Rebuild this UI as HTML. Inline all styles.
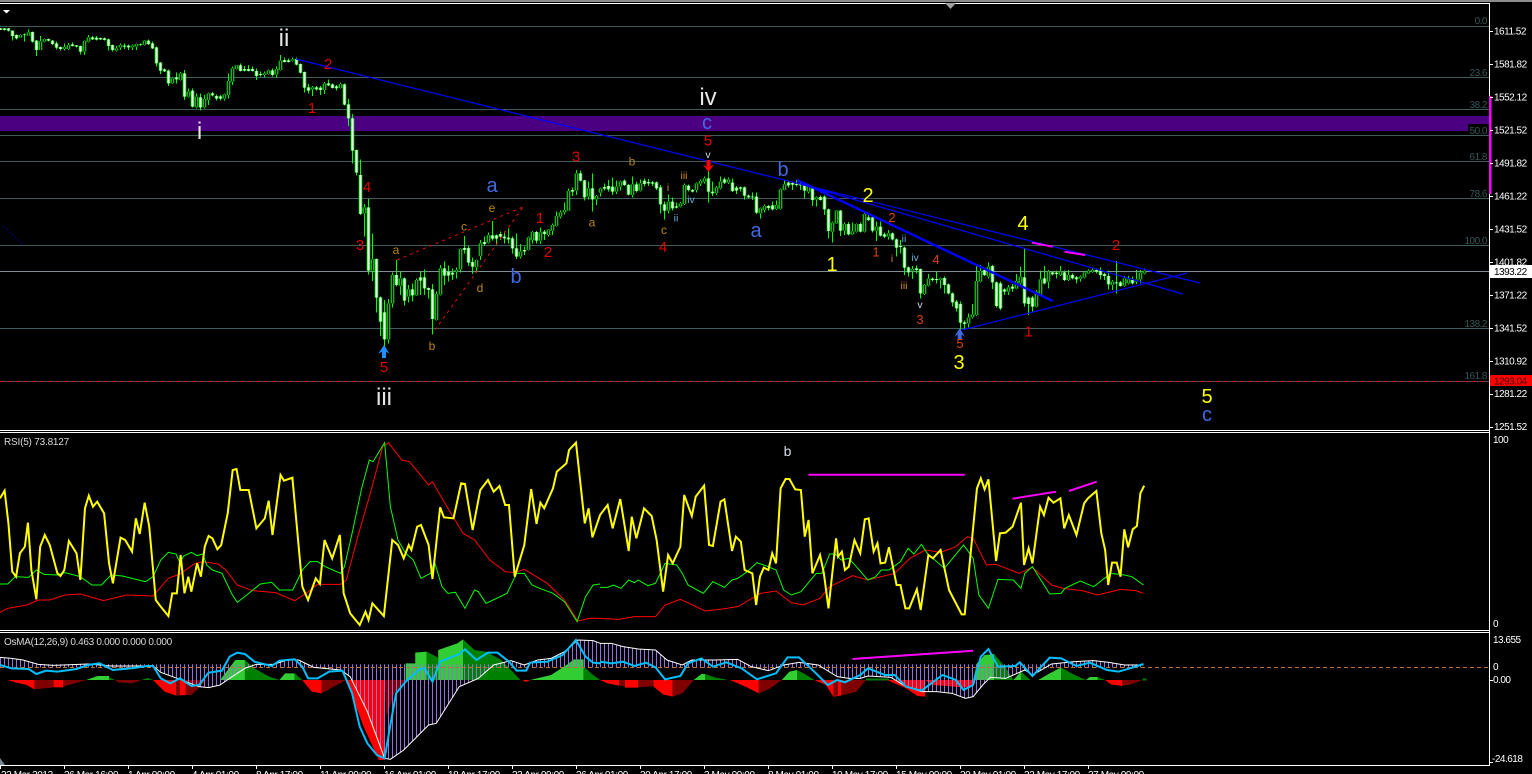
<!DOCTYPE html>
<html>
<head>
<meta charset="utf-8">
<style>
html,body{margin:0;padding:0;background:#000;width:1532px;height:774px;overflow:hidden}
svg{display:block;position:absolute;left:0;top:0}
text{font-family:"Liberation Sans",sans-serif}
.ax{fill:#fff;font-size:10px;letter-spacing:-.5px}
.fb{fill:#355555;font-size:10px;letter-spacing:-.5px;text-anchor:end}
.big{fill:#e6e6e6;font-size:24px;text-anchor:middle}
.bl{fill:#4169e1;font-size:20px;text-anchor:middle}
.ye{fill:#ffff00;font-size:20px;text-anchor:middle}
.rd{fill:#e00000;font-size:15px;text-anchor:middle}
.or{fill:#d8400f;font-size:13px;text-anchor:middle}
.go{fill:#b8860b;font-size:12px;text-anchor:middle}
.ro{fill:#d98a2b;font-size:10.5px;text-anchor:middle}
.rb{fill:#6fa8d8;font-size:10.5px;text-anchor:middle}
.tm{fill:#fff;font-size:10px;letter-spacing:-.4px}
.ln{fill:none;stroke-linejoin:miter;vector-effect:non-scaling-stroke}
</style>
</head>
<body>
<svg width="1532" height="774" viewBox="0 0 1532 774" xmlns="http://www.w3.org/2000/svg">
<defs>
<pattern id="h" width="4" height="10" patternUnits="userSpaceOnUse"><rect x="0" width="1" height="10" fill="#9370db"/></pattern>
<clipPath id="mc">
<rect x="0" y="664.3" width="1144" height="3.2"/>
<polygon transform="translate(0,430) scale(.3827,.3333)" points="0,707 0,682 30,685 60,690 100,703 140,706 230,702 290,708 400,708 420,727 470,748 520,770 545,773 575,765 600,745 640,715 670,703 715,703 750,690 780,690 820,712 890,720 915,740 960,845 1005,985 1020,988 1055,960 1120,885 1140,880 1200,770 1250,745 1290,705 1335,692 1370,705 1405,690 1440,685 1475,665 1510,630 1550,632 1568,640 1568,707"/>
<polygon transform="translate(600,430) scale(.3827,.3333)" points="0,707 0,640 30,640 60,650 100,657 145,660 175,690 215,705 240,690 300,690 360,688 395,710 440,722 480,705 520,697 570,705 620,740 650,745 680,745 700,738 760,742 800,770 840,785 880,785 920,790 955,805 975,800 1000,765 1020,742 1060,745 1110,720 1130,735 1180,702 1240,695 1290,692 1330,697 1370,705 1420,705 1420,707"/>
</clipPath>
<path id="b1w" d="M1 85V90M13 85V90M25 85V92M37 92V108M49 105V115M73 102V104M97 96V125M109 122V150M145 117V122M157 122V132M169 130V143M181 141V147M217 133V138M229 136V140M241 138V155M277 112V118M289 113V119M301 114V118M313 115V120M325 118V138M337 135V150M373 137V140M385 137V142M421 133V135M445 122V132M457 130V145M469 142V190M481 188V212M493 208V214M505 212V250M529 232V238M553 220V290M577 272V320M601 292V322M637 280V286M649 288V296M661 289V296M721 196V213M733 207V212M745 207V213M757 207V213M769 213V228M781 222V225M817 211V225M853 180V186M865 181V186M889 177V194M901 192V218M913 216V263M925 262V272M949 262V268M961 263V270M985 250V256M997 253V264M1009 259V265M1033 253V314M1045 313V355M1057 355V452M1069 450V518M1081 525V642M1105 622V812M1129 777V893M1141 892V965M1153 937V1018M1189 825V855M1213 835V902M1237 868V886M1261 832V842M1273 832V865M1285 864V870M1297 868V957M1333 805V827M1345 815V827M1357 818V824M1393 744V750M1405 744V788M1417 786V800M1453 726V732M1477 706V716M1489 706V716"/>
<path id="b1b" d="M61 105V113M85 97V107M121 124V150M133 117V125M193 141V147M205 135V147M253 123V155M265 112V125M349 145V152M361 135V142M397 137V142M409 132V140M433 122V135M517 235V250M541 220V240M565 275V290M589 290V322M613 297V322M625 280V300M673 283V296M685 243V285M697 205V245M709 196V207M793 220V225M805 211V222M829 207V224M841 182V210M877 178V182M937 262V268M973 250V270M1021 252V264M1093 622V640M1117 778V812M1165 910V1018M1177 825V910M1201 835V857M1225 868V890M1249 840V886M1309 882V960M1321 805V884M1369 810V815M1381 747V808M1429 780V802M1441 730V768M1465 705V728"/>
<path id="b2w" d="M1 462V470M13 470V475M25 473V478M37 475V505M49 505V530M73 510V514M109 456V482M133 455V462M217 330V335M241 280V302M253 301V352M277 325V358M313 321V326M325 318V328M337 320V335M373 302V315M385 315V344M409 313V333M433 302V312M445 306V310M457 307V311M469 307V325M481 322V373M493 373V392M517 365V385M529 379V383M565 317V330M577 330V335M625 295V335M637 335V340M673 298V308M697 308V333M709 323V332M721 322V326M733 322V347M745 347V352M757 350V352M769 350V398M805 378V384M817 376V388M865 308V316M877 309V314M889 312V315M901 312V316M913 315V332M937 325V360M961 351V360M973 350V388M985 388V453M1021 392V452M1045 432V463M1081 432V455M1105 412V420M1117 412V452M1141 440V467M1153 463V470M1177 460V478M1189 478V503M1201 498V501M1213 503V563M1225 562V577M1249 565V570M1261 567V640M1297 596V600M1309 597V600M1333 594V615M1345 613V640M1357 640V667M1369 665V685M1381 672V728M1393 727V732M1453 570V585M1477 558V607M1489 607V678"/>
<path id="b2b" d="M61 515V530M85 472V510M97 456V480M121 457V482M145 449V465M157 435V452M169 408V438M181 397V410M193 390V397M205 333V392M229 280V332M265 325V350M289 348V358M301 325V338M349 320V335M361 305V320M397 313V345M421 310V332M505 365V392M541 370V380M553 315V372M589 310V330M601 303V311M613 295V305M649 322V340M661 305V325M685 298V308M781 385V400M793 378V390M829 375V387M841 328V386M853 313V330M925 318V335M949 352V358M997 428V455M1009 392V430M1033 432V452M1057 454V463M1069 432V455M1093 402V455M1129 440V452M1165 460V470M1237 567V572M1273 615V642M1285 596V617M1321 595V600M1405 713V730M1417 703V712M1429 603V705M1441 573V605M1465 560V590"/>
<path id="b3w" d="M1000.5 850V925M1004.5 868V875M1012.5 860V866M1024.5 832V910M1028.5 893V912M1032.5 893V920M1044.5 835V850M1052.5 817V823M1056.5 818V822M1064.5 817V840M1072.5 825V835M1076.5 832V838M1096.5 810V815M1100.5 810V825M1104.5 822V828M1108.5 828V853M1116.5 847V850M1120.5 847V858M1132.5 840V850"/>
<path id="b3b" d="M1008.5 862V875M1016.5 843V866M1020.5 830V850M1036.5 875V920M1040.5 838V885M1048.5 815V845M1060.5 815V825M1068.5 825V840M1080.5 830V836M1084.5 817V832M1088.5 812V820M1092.5 810V815M1112.5 845V855M1124.5 835V857M1128.5 838V850M1136.5 838V845M1140.5 818V838M1144.5 812V820"/>
</defs>

<rect width="1532" height="774" fill="#000"/>
<rect x="0" y="0" width="1532" height="2" fill="#8c8c8c"/>

<!-- purple band -->
<rect x="0" y="116" width="1489" height="15" fill="#4b0082"/>

<!-- fib lines -->
<g stroke="#3d5c5c" stroke-width="1" shape-rendering="crispEdges">
<path d="M0 26.5H1489M0 77.5H1489M0 109.5H1489M0 135.5H1489M0 161.5H1489M0 198.5H1489M0 245.5H1489M0 328.5H1489M0 381.5H1489"/>
</g>
<path d="M0 271.5H1489" stroke="#7f8f97" stroke-width="1" shape-rendering="crispEdges"/>
<path d="M0 381.5H1489" stroke="#d01818" stroke-width="1" stroke-dasharray="5 3" shape-rendering="crispEdges"/>

<!-- fib labels -->
<text class="fb" x="1487" y="24">0.0</text>
<text class="fb" x="1487" y="76">23.6</text>
<text class="fb" x="1487" y="108">38.2</text>
<rect x="1468" y="124" width="21" height="11" fill="#000"/>
<text class="fb" x="1487" y="134">50.0</text>
<text class="fb" x="1487" y="160">61.8</text>
<text class="fb" x="1487" y="197">78.6</text>
<text class="fb" x="1487" y="244">100.0</text>
<text class="fb" x="1487" y="327">138.2</text>
<text class="fb" x="1487" y="379">161.8</text>

<!-- candles wicks -->
<g stroke="#00ff00" fill="none" shape-rendering="crispEdges">
<path transform="translate(.17,0) scale(.33333)" stroke-width="3" d="M1 84V90M13 84V91M25 84V94M37 92V122M49 103V118M61 103V114M73 100V125M85 88V108M97 94V127M109 120V168M121 108V150M133 115V127M145 115V124M157 120V135M169 125V148M181 139V152M193 130V152M205 129V150M217 128V140M229 135V142M241 136V163M253 121V165M265 105V128M277 108V120M289 108V122M301 112V120M313 113V122M325 116V152M337 133V155M349 138V155M361 130V150M373 130V147M385 133V150M397 133V150M409 130V150M421 130V138M433 120V136M445 119V135M457 125V147M469 140V200M481 186V222M493 206V216M505 208V258M517 233V252M529 218V250M541 216V242M553 210V300M565 265V292M577 265V322M589 280V325M601 280V332M613 285V325M625 278V315M637 276V290M649 283V302M661 285V302M673 281V302M685 220V295M697 200V255M709 195V208M721 190V215M733 198V214M745 195V215M757 200V215M769 205V240M781 215V230M793 215V232M805 209V224M817 205V230M829 200V232M841 165V212M853 172V188M865 176V188M877 172V184M889 172V196M901 190V220M913 214V278M925 252V280M937 258V288M949 258V272M961 258V285M973 246V282M985 238V258M997 250V266M1009 255V272M1021 248V266M1033 251V316M1045 297V378M1057 342V490M1069 448V527M1081 478V645M1093 612V710M1105 597V823M1117 700V843M1129 775V938M1141 890V1008M1153 900V1060M1165 897V1030M1177 818V922M1189 780V860M1201 815V885M1213 833V917M1225 855V908M1237 850V905M1249 835V888M1261 815V885M1273 808V885M1285 862V895M1297 852V1003M1309 875V962M1321 795V886M1333 785V855M1345 797V845M1357 805V840M1369 802V835M1381 745V818M1393 708V760M1405 738V798M1417 772V822M1429 778V818M1441 720V780M1453 710V738M1465 698V730M1477 663V722M1489 704V735"/>
<path transform="translate(500.17,80) scale(.33333)" stroke-width="3" d="M1 455V480M13 455V490M25 445V490M37 470V520M49 460V537M61 492V535M73 500V525M85 470V512M97 453V490M109 453V490M121 442V492M133 450V480M145 447V470M157 430V465M169 395V440M181 392V415M193 368V403M205 325V393M217 322V348M229 270V345M241 272V305M253 300V362M265 305V358M277 280V395M289 345V375M301 322V350M313 310V332M325 300V335M337 292V345M349 302V342M361 302V332M373 298V318M385 312V346M397 290V352M409 305V338M421 298V335M433 295V320M445 297V318M457 303V318M469 304V330M481 315V400M493 365V418M505 343V400M517 352V392M529 368V386M541 366V382M553 310V375M565 314V335M577 327V338M589 307V338M601 298V318M613 290V310M625 262V368M637 305V348M649 318V345M661 290V328M673 292V312M685 292V312M697 295V336M709 318V342M721 319V335M733 319V358M745 343V355M757 338V360M769 338V402M781 382V415M793 374V398M805 375V392M817 365V392M829 362V390M841 325V388M853 302V332M865 303V322M877 305V330M889 300V320M901 308V330M913 310V356M925 312V340M937 318V378M949 349V380M961 347V362M973 347V405M985 385V475M997 425V488M1009 390V432M1021 390V468M1033 428V465M1045 426V467M1057 428V465M1069 430V458M1081 428V458M1093 395V458M1105 405V423M1117 409V458M1129 425V483M1141 425V470M1153 458V474M1165 450V478M1177 457V481M1189 476V530M1201 480V520M1213 500V585M1225 560V590M1237 558V597M1249 557V580M1261 565V655M1273 612V645M1285 582V620M1297 592V604M1309 575V610M1321 592V625M1333 590V640M1345 610V643M1357 638V680M1369 660V695M1381 665V770M1393 722V748M1405 700V742M1417 672V716M1429 553V708M1441 555V608M1453 565V588M1465 547V595M1477 555V627M1489 604V682"/>
<path transform="scale(1,.33333)" stroke-width="1" d="M1000.5 845V930M1004.5 865V885M1008.5 855V885M1012.5 852V875M1016.5 822V868M1020.5 800V855M1024.5 745V920M1028.5 890V945M1032.5 888V935M1036.5 870V922M1040.5 812V888M1044.5 798V853M1048.5 810V865M1052.5 813V826M1056.5 812V835M1060.5 798V828M1064.5 812V843M1068.5 810V843M1072.5 820V838M1076.5 828V850M1080.5 826V845M1084.5 814V835M1088.5 808V822M1092.5 803V818M1096.5 805V820M1100.5 802V838M1104.5 818V840M1108.5 812V868M1112.5 840V870M1116.5 783V880M1120.5 843V860M1124.5 828V860M1128.5 828V853M1132.5 830V853M1136.5 810V852M1140.5 810V850M1144.5 805V823"/>
</g>
<!-- candle bodies -->
<g fill="none">
<g transform="translate(.17,0) scale(.33333)">
<use href="#b1w" stroke="#00ff00" stroke-width="10.5"/><use href="#b1b" stroke="#00ff00" stroke-width="10.5"/>
<use href="#b1w" stroke="#fff" stroke-width="5.5"/><use href="#b1b" stroke="#000" stroke-width="4.5"/>
</g>
<g transform="translate(500.17,80) scale(.33333)">
<use href="#b2w" stroke="#00ff00" stroke-width="10.5"/><use href="#b2b" stroke="#00ff00" stroke-width="10.5"/>
<use href="#b2w" stroke="#fff" stroke-width="5.5"/><use href="#b2b" stroke="#000" stroke-width="4.5"/>
</g>
<g transform="scale(1,.33333)">
<use href="#b3w" stroke="#00ff00" stroke-width="3.5"/><use href="#b3b" stroke="#00ff00" stroke-width="3.5"/>
<use href="#b3w" stroke="#fff" stroke-width="1.8"/><use href="#b3b" stroke="#000" stroke-width="1.5"/>
</g>
</g>

<!-- trend lines -->
<path d="M296 59L1200 283M800 184L1183 294M962 330L1187 273" stroke="#0000ff" stroke-width="1.2" fill="none"/>
<path d="M797 180L1052.6 301" stroke="#0000ff" stroke-width="2.4" fill="none"/>
<path d="M3 226L24 245" stroke="#000080" stroke-width="1" stroke-dasharray="2 2" fill="none"/>
<path d="M397 260L523 207M435 330L523 207" stroke="#e01010" stroke-width="1" stroke-dasharray="3 4" fill="none"/>
<path d="M1032 242.7L1052.6 246.7M1064.5 251.7L1085 255" stroke="#ff00ff" stroke-width="2" fill="none"/>

<!-- arrows -->
<polygon points="384,345 389.5,354 386,351.5 386,358 382,358 382,351.5 378,354" fill="#1e90ff"/>
<polygon points="959.7,328 965,337 961.7,334.5 961.7,340 957.7,340 957.7,334.5 954.3,337" fill="#4169e1"/>
<polygon points="706.5,160 710.5,160 710.5,166.5 714,164.5 708.5,172 703,164.5 706.5,166.5" fill="#ff0000"/>

<!-- wave labels -->
<text class="big" x="284" y="46">ii</text>
<text class="big" x="199.5" y="139">i</text>
<text class="big" x="384" y="405">iii</text>
<text class="big" x="708" y="105">iv</text>

<text class="bl" x="707" y="129">c</text>
<text class="bl" x="1207" y="421">c</text>
<text class="bl" x="492" y="192">a</text>
<text class="bl" x="516" y="283">b</text>
<text class="bl" x="756" y="237">a</text>
<text class="bl" x="783" y="176">b</text>

<text class="ye" x="832" y="271">1</text>
<text class="ye" x="868" y="202">2</text>
<text class="ye" x="959" y="369">3</text>
<text class="ye" x="1023" y="230">4</text>
<text class="ye" x="1207" y="403">5</text>

<text class="rd" x="328" y="69">2</text>
<text class="rd" x="312" y="113">1</text>
<text class="rd" x="367" y="192">4</text>
<text class="rd" x="360" y="250">3</text>
<text class="rd" x="384" y="372">5</text>
<text class="rd" x="576" y="161.7">3</text>
<text class="rd" x="540" y="223">1</text>
<text class="rd" x="548" y="257">2</text>
<text class="rd" x="663" y="252">4</text>
<text class="rd" x="708" y="145.7">5</text>
<text class="rd" x="1028.5" y="336.5">1</text>
<text class="rd" x="1116" y="250">2</text>

<text class="or" x="876" y="256.5">1</text>
<text class="or" x="892" y="222">2</text>
<text class="or" x="936" y="264">4</text>
<text class="or" x="920" y="324">3</text>
<text class="or" x="960" y="348">5</text>

<text class="go" x="396" y="254">a</text>
<text class="go" x="432" y="350">b</text>
<text class="go" x="464" y="230.5">c</text>
<text class="go" x="480" y="292">d</text>
<text class="go" x="492" y="212">e</text>
<text class="go" x="632" y="165.5">b</text>
<text class="go" x="592" y="226.5">a</text>
<text class="go" x="664" y="234">c</text>

<text class="ro" x="684" y="179">iii</text>
<text class="ro" x="668" y="191">i</text>
<text class="rb" x="691" y="203">iv</text>
<text class="rb" x="676" y="221.5">ii</text>
<text class="rb" x="904" y="242">ii</text>
<text class="rb" x="915" y="261">iv</text>
<text class="ro" x="892" y="262">i</text>
<text class="ro" x="904" y="289">iii</text>
<text fill="#c8d8e8" font-size="10.5" text-anchor="middle" x="708" y="158">v</text>
<text fill="#c8d8e8" font-size="10.5" text-anchor="middle" x="920" y="308">v</text>

<!-- frames -->
<g stroke="#fff" stroke-width="1" shape-rendering="crispEdges" fill="none">
<path d="M0 3.5H1489.5V765.5H0"/>
<path d="M0 430.5H1489M0 432.5H1489M0 630.5H1489M0 632.5H1489"/>
</g>
<polygon points="3,10 10,10 6.5,13.5" fill="#fff"/>
<polygon points="945,3 956,3 950.5,9" fill="#a0a0a0"/>
<polygon points="0,758 5,765 0,765" fill="#789"/>
<rect x="1489" y="96" width="2.5" height="98" fill="#ff00ff"/>

<!-- axis ticks -->
<path d="M1490 31.5h3M1490 64.5h3M1490 97.5h3M1490 130.5h3M1490 163.5h3M1490 196.5h3M1490 229.5h3M1490 262.5h3M1490 295.5h3M1490 328.5h3M1490 361.5h3M1490 394.5h3M1490 427.5h3M1490 680.5h3M1490 762.5h3M.5 766v3M64.5 766v3M128.5 766v3M192.5 766v3M256.5 766v3M320.5 766v3M384.5 766v3M448.5 766v3M512.5 766v3M576.5 766v3M640.5 766v3M704.5 766v3M768.5 766v3M832.5 766v3M896.5 766v3M960.5 766v3M1024.5 766v3M1088.5 766v3" stroke="#fff" stroke-width="1" shape-rendering="crispEdges"/>

<!-- axis labels -->
<g transform="translate(0,-.6)">
<text class="ax" x="1494" y="35">1611.52</text>
<text class="ax" x="1494" y="68">1581.82</text>
<text class="ax" x="1494" y="101">1552.12</text>
<text class="ax" x="1494" y="134">1521.52</text>
<text class="ax" x="1494" y="167">1491.82</text>
<text class="ax" x="1494" y="200">1461.22</text>
<text class="ax" x="1494" y="233">1431.52</text>
<text class="ax" x="1494" y="266">1401.82</text>
<text class="ax" x="1494" y="299">1371.22</text>
<text class="ax" x="1494" y="332">1341.52</text>
<text class="ax" x="1494" y="365">1310.92</text>
<text class="ax" x="1494" y="397.5">1281.22</text>
<text class="ax" x="1494" y="430.5">1251.52</text>
</g>
<rect x="1490" y="265" width="42" height="13" fill="#fff"/>
<text class="ax" style="fill:#000" x="1494" y="275">1393.22</text>
<rect x="1490" y="375" width="42" height="11" fill="#ff0000"/>
<text class="ax" style="fill:#400" x="1494" y="384.5">1293.04</text>
<text class="ax" x="1493" y="443">100</text>
<text class="ax" x="1493" y="627">0</text>
<text class="ax" x="1493" y="643">13.655</text>
<text class="ax" x="1493" y="670">0</text>
<text class="ax" x="1493" y="683">0.00</text>
<text class="ax" x="1492" y="762">-24.618</text>

<!-- RSI -->
<text fill="#d8d8d8" font-size="10" letter-spacing="-.2" x="4" y="445">RSI(5) 73.8127</text>
<text fill="#d8d8e8" font-size="14" text-anchor="middle" x="787.5" y="456">b</text>

<g transform="translate(0,430) scale(.3827,.33333)">
<polyline class="ln" stroke="#ff0000" stroke-width="1" points="0,547 20,535 70,525 100,510 130,510 170,495 210,492 270,512 330,495 400,498 440,445 470,432 510,400 530,395 570,402 590,420 620,465 660,482 720,488 770,512 800,490 830,463 890,463 905,450 935,320 970,180 1000,50 1015,38 1050,90 1070,95 1120,165 1130,155 1160,215 1210,310 1240,330 1280,390 1320,425 1345,428 1370,418 1430,460 1475,510 1510,573 1540,565 1568,565"/>
<polyline class="ln" stroke="#00ff00" stroke-width="1" points="0,462 20,462 40,440 75,442 95,420 115,433 150,435 170,428 210,440 240,465 265,465 290,435 320,438 380,455 400,440 420,390 440,367 460,372 470,398 480,378 500,367 515,377 530,372 540,405 555,420 580,430 605,490 620,517 650,490 680,462 710,457 730,480 765,480 790,420 810,395 830,395 850,410 890,430 900,410 920,310 945,175 965,90 975,95 1005,38 1020,230 1040,330 1060,370 1080,390 1100,445 1125,430 1135,395 1155,470 1170,490 1190,487 1215,535 1240,480 1250,485 1270,520 1325,490 1350,430 1370,430 1390,465 1410,475 1445,490 1475,515 1508,575 1530,500 1550,465 1568,462"/>
<polyline class="ln" stroke="#ffff00" stroke-width="2" points="0,205 12,182 22,280 32,425 42,440 52,370 65,350 73,278 82,420 95,508 105,350 117,315 130,345 150,430 158,438 168,420 180,333 200,370 210,450 222,235 232,197 243,230 254,215 272,250 285,400 295,460 315,323 327,330 345,365 355,265 365,312 378,218 390,290 407,510 420,530 440,558 450,490 462,490 472,375 482,490 492,440 500,485 515,400 525,440 535,350 545,318 555,325 568,358 578,345 595,250 608,120 618,117 628,180 650,180 670,295 692,265 702,212 712,315 733,135 742,152 764,143 790,470 805,510 825,445 836,462 848,330 868,385 888,315 898,490 915,550 940,585 955,545 963,570 973,520 1003,558 1025,330 1040,345 1055,385 1068,345 1075,360 1090,290 1100,285 1120,345 1130,447 1150,232 1160,262 1185,265 1205,160 1215,162 1235,300 1255,180 1275,150 1290,185 1305,168 1320,225 1330,225 1345,440 1370,345 1388,177 1402,282 1412,218 1422,235 1445,175 1455,125 1480,100 1487,60 1505,38 1528,280 1538,235 1548,322 1568,255"/>
</g>
<g transform="translate(600,430) scale(.3827,.33333)">
<polyline class="ln" stroke="#ff0000" stroke-width="1" points="0,565 50,568 90,560 145,560 170,525 210,508 275,543 320,537 360,530 420,490 460,483 500,518 530,525 575,505 600,470 660,437 700,450 770,430 810,385 850,360 890,367 930,350 960,320 975,325 1010,405 1035,403 1095,430 1130,412 1180,465 1210,475 1260,482 1300,495 1360,478 1400,482 1420,490"/>
<polyline class="ln" stroke="#00ff00" stroke-width="1" points="0,472 20,472 35,465 55,475 75,450 90,458 100,450 125,467 145,460 170,400 200,405 215,430 230,465 270,490 295,455 325,472 345,450 360,445 385,425 410,398 440,410 460,420 480,480 500,495 525,485 565,430 580,430 600,372 615,372 630,390 650,385 670,410 700,450 720,440 735,420 755,420 785,395 805,355 820,372 840,343 855,370 900,415 950,345 975,385 990,495 1015,535 1040,448 1080,450 1100,475 1110,430 1130,410 1175,492 1205,490 1215,475 1255,453 1290,470 1335,430 1370,435 1390,440 1420,465"/>
<polyline class="ln" stroke="#ffff00" stroke-width="2" points="0,255 20,225 33,295 53,207 75,363 83,260 95,325 115,235 135,258 148,330 165,485 178,375 190,400 210,350 220,195 240,258 250,200 272,167 285,345 295,348 315,215 325,208 345,363 355,320 368,335 378,420 398,430 408,525 418,440 428,413 440,420 450,370 460,400 472,175 485,147 495,147 510,178 525,180 535,320 545,270 555,430 575,375 585,430 597,535 617,325 622,380 632,365 640,420 650,410 665,330 680,370 692,268 702,265 715,365 725,340 733,400 745,398 755,352 775,465 785,465 798,535 808,535 828,478 838,540 858,375 870,385 890,360 912,480 945,553 953,553 985,175 995,145 1005,178 1015,148 1035,393 1045,310 1060,308 1078,290 1100,218 1108,405 1120,355 1130,400 1150,230 1160,255 1172,203 1185,218 1203,205 1213,295 1225,255 1245,315 1265,220 1275,205 1297,183 1310,310 1320,360 1328,465 1338,398 1350,398 1360,440 1370,298 1380,352 1392,298 1403,288 1412,190 1422,167"/>
</g>
<path d="M808.5 474.7H964.7M1012.5 498.7L1056 491.7M1069 491L1096.7 481.7" stroke="#ff00ff" stroke-width="2" fill="none"/>

<!-- OsMA -->
<text fill="#d8d8d8" font-size="10" letter-spacing="-.3" x="4" y="645">OsMA(12,26,9) 0.463 0.000 0.000 0.000</text>

<g transform="translate(0,430) scale(.3827,.33333)">
<polygon fill="#ff0000" points="20,750 90,750 90,778 70,765 40,757"/>
<polygon fill="#800000" points="90,750 140,750 140,772 90,778"/>
<polygon fill="#ff0000" points="140,750 165,750 165,772 140,772"/>
<polygon fill="#800000" points="165,750 225,750 165,770"/>
<polygon fill="#32cd32" points="225,750 255,738 285,738 285,750"/>
<polygon fill="#008000" points="285,750 300,750 285,742"/>
<polygon fill="#800000" points="300,750 370,750 345,760 310,757"/>
<polygon fill="#008000" points="370,750 400,750 385,744"/>
<polygon fill="#ff0000" points="400,750 460,750 460,797 430,785"/>
<polygon fill="#800000" points="460,750 540,750 500,795 460,797"/>
<rect fill="#ff0000" x="470" y="750" width="15" height="45"/>
<polygon fill="#32cd32" points="575,750 615,690 640,690 640,750"/>
<polygon fill="#008000" points="640,750 730,750 700,738 665,715 640,690"/>
<polygon fill="#32cd32" points="730,750 745,730 770,730 770,750"/>
<polygon fill="#008000" points="770,750 790,750 770,730"/>
<polygon fill="#ff0000" points="790,750 840,750 840,790 815,785 800,765"/>
<polygon fill="#800000" points="840,750 905,750 880,765 840,790"/>
<polygon fill="#ff0000" points="905,750 1005,750 1005,990 990,990 950,890"/>
<polygon fill="#800000" points="1005,750 1060,750 1030,790 1010,860"/>
<polygon fill="#32cd32" points="1060,750 1060,700 1085,700 1085,668 1115,665 1115,750"/>
<polygon fill="#008000" points="1115,750 1145,750 1145,683 1115,665"/>
<polygon fill="#32cd32" points="1145,750 1145,660 1195,640 1210,628 1210,750"/>
<polygon fill="#008000" points="1210,750 1360,750 1310,690 1270,665 1240,660 1210,628"/>
<polygon fill="#ff0000" points="1365,750 1385,750 1375,756"/>
<polygon fill="#32cd32" points="1385,750 1440,735 1480,705 1500,688 1525,688 1525,750"/>
<polygon fill="#008000" points="1525,750 1568,750 1550,735 1525,710"/>
</g>
<g transform="translate(600,430) scale(.3827,.33333)">
<polygon fill="#ff0000" points="0,750 50,750 50,767 20,760"/>
<rect fill="#ff0000" x="65" y="750" width="35" height="23"/>
<polygon fill="#800000" points="50,750 65,750 65,768 50,767"/>
<polygon fill="#800000" points="100,750 140,750 140,768 100,772"/>
<polygon fill="#ff0000" points="140,750 190,750 190,800 165,793 140,770"/>
<polygon fill="#800000" points="190,750 245,750 215,790 190,800"/>
<polygon fill="#32cd32" points="245,750 265,732 275,732 275,750"/>
<polygon fill="#008000" points="275,750 335,750 300,742 275,732"/>
<polygon fill="#ff0000" points="340,750 415,750 415,790 380,770"/>
<polygon fill="#800000" points="415,750 475,750 445,775 415,790"/>
<polygon fill="#32cd32" points="475,750 495,725 515,720 515,750"/>
<polygon fill="#008000" points="515,750 560,750 535,732 515,720"/>
<polygon fill="#ff0000" points="560,750 630,750 630,797 610,800 590,765"/>
<polygon fill="#800000" points="610,750 622,750 622,797 610,797"/>
<polygon fill="#800000" points="630,750 695,750 670,785 630,797"/>
<path d="M695 748.5H755" stroke="#008000" stroke-width="2" vector-effect="non-scaling-stroke" fill="none"/>
<polygon fill="#ff0000" points="750,750 850,750 850,800 830,798 800,775"/>
<polygon fill="#ff0000" points="850,750 975,750 975,770 950,772 870,765"/>
<polygon fill="#32cd32" points="975,750 985,700 1005,675 1030,672 1030,750"/>
<polygon fill="#008000" points="1030,750 1080,750 1060,712 1030,672"/>
<polygon fill="#32cd32" points="1080,750 1100,725 1100,750"/>
<polygon fill="#008000" points="1100,750 1125,750 1100,725"/>
<polygon fill="#32cd32" points="1145,750 1175,730 1205,712 1205,750"/>
<polygon fill="#008000" points="1205,750 1270,750 1235,732 1205,712"/>
<polygon fill="#32cd32" points="1270,750 1280,741 1300,741 1300,750"/>
<polygon fill="#008000" points="1300,750 1320,750 1300,741"/>
<polygon fill="#ff0000" points="1320,750 1365,750 1365,768 1335,763"/>
<polygon fill="#800000" points="1365,750 1418,750 1390,762 1365,768"/>
<path d="M1418 748.5H1428" stroke="#008000" stroke-width="2" vector-effect="non-scaling-stroke" fill="none"/>
</g>
<rect x="0" y="640" width="1144" height="125" fill="url(#h)" clip-path="url(#mc)"/>
<path d="M0 667.5H1489" stroke="#c07030" stroke-width="1" stroke-dasharray="4 3" shape-rendering="crispEdges"/>
<g transform="translate(0,430) scale(.3827,.33333)">
<polyline class="ln" stroke="#fff" stroke-width="1" points="0,682 30,685 60,690 100,703 140,706 230,702 290,708 400,708 420,727 470,748 520,770 545,773 575,765 600,745 640,715 670,703 715,703 750,690 780,690 820,712 890,720 915,740 960,845 1005,985 1020,988 1055,960 1120,885 1140,880 1200,770 1250,745 1290,705 1335,692 1370,705 1405,690 1440,685 1475,665 1510,630 1550,632 1568,640"/>
<polyline class="ln" stroke="#00bfff" stroke-width="2" points="0,705 30,715 75,717 95,732 120,722 150,725 200,717 230,705 260,700 295,720 350,714 385,708 400,708 420,745 445,760 470,745 500,768 520,765 545,728 580,722 600,680 620,668 640,672 665,695 710,708 730,692 770,688 790,710 805,745 830,745 860,725 895,722 920,790 940,890 960,940 985,975 1005,985 1020,885 1035,790 1060,755 1100,715 1110,715 1130,755 1150,695 1200,672 1215,658 1245,690 1275,668 1300,668 1330,695 1350,722 1375,722 1385,698 1430,695 1470,675 1505,630 1530,680 1550,698 1568,700"/>
</g>
<g transform="translate(600,430) scale(.3827,.33333)">
<polyline class="ln" stroke="#fff" stroke-width="1" points="0,640 30,640 60,650 100,657 145,660 175,690 215,705 240,690 300,690 360,688 395,710 440,722 480,705 520,697 570,705 620,740 650,745 680,745 700,738 760,742 800,770 840,785 880,785 920,790 955,805 975,800 1000,765 1020,742 1060,745 1110,720 1130,735 1180,702 1240,695 1290,692 1330,697 1370,705 1420,705"/>
<polyline class="ln" stroke="#00bfff" stroke-width="2" points="0,695 30,700 60,695 90,708 120,698 145,712 170,748 210,738 230,700 265,685 295,710 330,697 370,715 410,748 460,730 490,682 520,682 560,725 595,765 620,750 640,757 680,735 700,715 745,735 770,735 800,770 840,782 895,735 930,750 950,780 975,765 995,680 1015,657 1040,710 1085,708 1097,697 1130,738 1175,683 1205,685 1245,708 1280,698 1325,720 1355,725 1385,715 1420,702"/>
</g>
<path d="M852.6 659L973 650.7" stroke="#ff00ff" stroke-width="2" fill="none"/>

<!-- time axis -->
<text class="tm" x="1" y="778">22 Mar 2013</text>
<text class="tm" x="64" y="778">26 Mar 16:00</text>
<text class="tm" x="128" y="778">1 Apr 09:00</text>
<text class="tm" x="192" y="778">4 Apr 01:00</text>
<text class="tm" x="256" y="778">8 Apr 17:00</text>
<text class="tm" x="320" y="778">11 Apr 09:00</text>
<text class="tm" x="384" y="778">16 Apr 01:00</text>
<text class="tm" x="448" y="778">18 Apr 17:00</text>
<text class="tm" x="512" y="778">23 Apr 09:00</text>
<text class="tm" x="576" y="778">26 Apr 01:00</text>
<text class="tm" x="640" y="778">30 Apr 17:00</text>
<text class="tm" x="704" y="778">3 May 09:00</text>
<text class="tm" x="768" y="778">8 May 01:00</text>
<text class="tm" x="832" y="778">10 May 17:00</text>
<text class="tm" x="896" y="778">15 May 09:00</text>
<text class="tm" x="960" y="778">20 May 01:00</text>
<text class="tm" x="1024" y="778">22 May 17:00</text>
<text class="tm" x="1088" y="778">27 May 09:00</text>
</svg>
</body>
</html>
